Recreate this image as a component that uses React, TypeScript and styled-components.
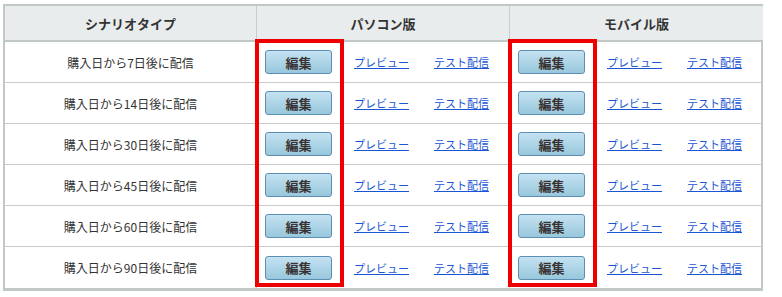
import React from "react";
import styled, { createGlobalStyle } from "styled-components";

const GlobalStyle = createGlobalStyle`
	html, body {
		margin: 0;
		background: #fff;
	}
	body {
		padding: 4px 0 0 3px;
		font-family: "Noto Sans CJK JP", "Noto Sans", sans-serif;
		color: #333;
	}
`;

const scenarios = [7, 14, 30, 45, 60, 90];

function ActionCell() {
	return (
		<ActionWrap>
			<EditButton type="button">編集</EditButton>
			<TextLink href="#" $first>
				プレビュー
			</TextLink>
			<TextLink href="#">テスト配信</TextLink>
		</ActionWrap>
	);
}

function App() {
	return (
		<>
			<GlobalStyle />
			<Frame>
				<Table>
					<HeadCell>シナリオタイプ</HeadCell>
					<HeadCell>パソコン版</HeadCell>
					<HeadCell $last>モバイル版</HeadCell>
					{scenarios.map((days, i) => (
						<React.Fragment key={days}>
							<Cell $bottom={i < scenarios.length - 1}>
								購入日から{days}日後に配信
							</Cell>
							<Cell $bottom={i < scenarios.length - 1} $start>
								<ActionCell />
							</Cell>
							<Cell $bottom={i < scenarios.length - 1} $start $last>
								<ActionCell />
							</Cell>
						</React.Fragment>
					))}
				</Table>
				<Highlight $left={252} />
				<Highlight $left={505} />
			</Frame>
		</>
	);
}

export default App;

const Frame = styled.div`
	position: relative;
	width: 760px;
`;

const Table = styled.div`
	display: grid;
	grid-template-columns: 252px 253px 253px;
	grid-template-rows: 36px repeat(6, 41px);
	border: 2px solid #c2c8c6;
	border-bottom-width: 3px;
	box-sizing: border-box;
	width: 760px;
`;

const HeadCell = styled.div<{ $last?: boolean }>`
	display: flex;
	align-items: center;
	justify-content: center;
	background: #e9eced;
	border-bottom: 2px solid #c2c8c6;
	border-right: ${(p) => (p.$last ? "none" : "1px solid #c8cdcb")};
	font-size: 13px;
	font-weight: bold;
	color: #333;
`;

const Cell = styled.div<{ $bottom?: boolean; $start?: boolean; $last?: boolean }>`
	display: flex;
	align-items: center;
	justify-content: ${(p) => (p.$start ? "flex-start" : "center")};
	border-bottom: ${(p) => (p.$bottom ? "1px solid #c8cdcb" : "none")};
	border-right: ${(p) => (p.$last ? "none" : "1px solid #c8cdcb")};
	font-size: 12px;
	color: #333;
`;

const ActionWrap = styled.div`
	display: flex;
	align-items: center;
	padding-left: 8px;
`;

const EditButton = styled.button`
	width: 67px;
	height: 24px;
	padding: 0;
	border: 1px solid #5c8fb3;
	border-radius: 3px;
	background: linear-gradient(#c4e2f2, #98c7dc);
	font-family: inherit;
	font-size: 13px;
	font-weight: bold;
	color: #3a3333;
	cursor: pointer;
`;

const TextLink = styled.a<{ $first?: boolean }>`
	margin-left: ${(p) => (p.$first ? "22px" : "25px")};
	font-size: 11px;
	color: #1a55d4;
	text-decoration: underline;
	white-space: nowrap;
`;

// red call-out frame drawn over the edit buttons column
const Highlight = styled.div<{ $left: number }>`
	position: absolute;
	top: 35px;
	left: ${(p) => p.$left}px;
	width: 89px;
	height: 248px;
	border: 4px solid #ee0000;
	box-sizing: border-box;
	pointer-events: none;
`;
